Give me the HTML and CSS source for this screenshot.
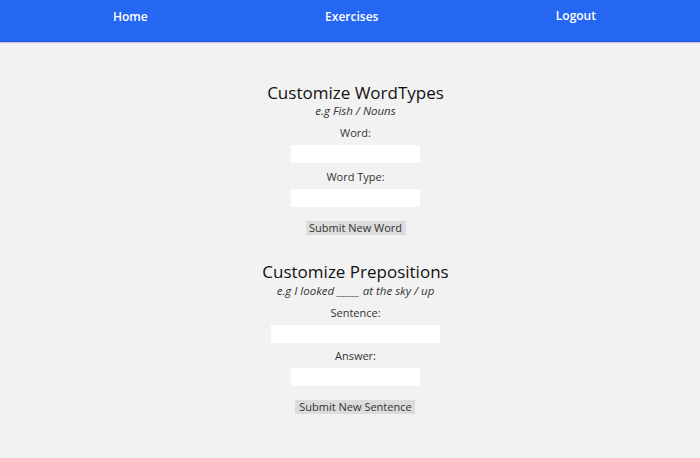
FILE: index.html
```html
<!DOCTYPE html>
<html>
<head>
<meta charset="utf-8">
<link rel="stylesheet" href="styles.css">
</head>
<body>
<nav class="nav">
  <a class="nav-link" href="#">Home</a>
  <a class="nav-link" href="#">Exercises</a>
  <a class="nav-link nav-logout" href="#">Logout</a>
</nav>
<main class="main">
  <section class="block">
    <h1 class="title">Customize WordTypes</h1>
    <p class="hint">e.g Fish / Nouns</p>
    <label class="label">Word:</label>
    <input class="field" type="text">
    <label class="label">Word Type:</label>
    <input class="field" type="text">
    <button class="submit">Submit New Word</button>
  </section>
  <section class="block block-second">
    <h1 class="title">Customize Prepositions</h1>
    <p class="hint">e.g I looked _____ at the sky / up</p>
    <label class="label">Sentence:</label>
    <input class="field field-wide" type="text">
    <label class="label label-tight">Answer:</label>
    <input class="field" type="text">
    <button class="submit submit-wide">Submit New Sentence</button>
  </section>
</main>
</body>
</html>
```

FILE: styles.css
```css
* { box-sizing: border-box; }
body {
  margin: 0;
  background: #f2f2f2;
  font-family: "Open Sans", "DejaVu Sans", sans-serif;
  color: #222;
}
.nav {
  height: 42px;
  background: #2567f2;
  border-bottom: 1px solid #1c55d6;
  box-shadow: 0 1px 1px rgba(120, 130, 200, 0.35);
  display: flex;
  justify-content: space-between;
  align-items: flex-start;
  padding: 8px 104px 0 113px;
}
.nav-link {
  color: #fff;
  text-decoration: none;
  font-size: 12px;
  font-weight: 600;
  line-height: 17px;
}
.nav-logout { margin-top: -1px; }
.main {
  display: flex;
  flex-direction: column;
  align-items: center;
  padding-top: 41px;
  padding-left: 11px;
}
.block {
  display: flex;
  flex-direction: column;
  align-items: center;
}
.block-second { margin-top: 27px; }
.title {
  margin: 0;
  font-size: 17px;
  line-height: 20px;
  font-weight: 400;
  color: #111;
}
.hint {
  margin: 1px 0 0;
  font-size: 11.5px;
  line-height: 13px;
  font-style: italic;
  color: #333;
}
.block-second .hint { margin-top: 2px; }
.label {
  margin-top: 8px;
  font-size: 11px;
  line-height: 15px;
  color: #333;
}
.field + .label { margin-top: 6px; }
.field + .label-tight { margin-top: 5px; }
.field {
  margin-top: 5px;
  width: 129px;
  height: 18px;
  border: none;
  background: #fff;
  padding: 0 2px;
  font: 11px "Open Sans", sans-serif;
}
.field-wide { width: 169px; }
.submit {
  margin-top: 14px;
  width: 100px;
  height: 14px;
  padding: 0;
  border: none;
  background: #dcdcdc;
  color: #333;
  font: 11px/14px "Open Sans", sans-serif;
}
.submit-wide { width: 120px; }
```
